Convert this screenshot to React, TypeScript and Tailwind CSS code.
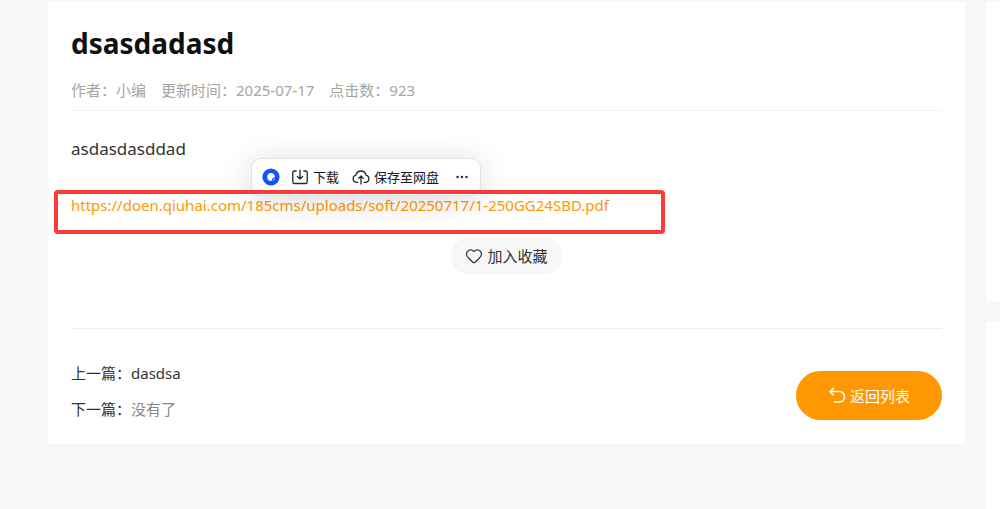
import { Heart } from "lucide-react";

const fileUrl = "https://doen.qiuhai.com/185cms/uploads/soft/20250717/1-250GG24SBD.pdf";

function DownloadBar() {
    return (
        <div className="absolute left-[180px] -top-[29px] flex h-[38px] w-[230px] items-center rounded-[10px] border border-[#e2e2e4] bg-white pl-[10px] font-['Noto_Sans_CJK_SC',sans-serif] text-[13px] text-[#14142b] shadow-[0_4px_32px_rgba(0,0,0,0.15)]">
            <svg className="size-[18px] shrink-0" viewBox="0 0 18 18" fill="none">
                <circle cx="9" cy="9" r="8.6" fill="#1254fb" />
                <path d="M9 5a4 4 0 0 1 4 4.2c-1.9.1-3.3 1.3-3.5 3.8A4 4 0 1 1 9 5Z" fill="#fff" />
                <path d="M10.8 12.6c.1-1.1.8-1.8 1.9-2-.2.9-.9 1.7-1.9 2Z" fill="#fff" />
            </svg>
            <button type="button" className="ml-[11px] flex items-center gap-1 whitespace-nowrap">
                <svg className="size-[18px]" viewBox="0 0 18 18" fill="none" stroke="#24243a" strokeWidth="1.3" strokeLinecap="round" strokeLinejoin="round">
                    <path d="M5.2 3H3.4A1.6 1.6 0 0 0 1.8 4.6v9.3a1.6 1.6 0 0 0 1.6 1.6h11.2a1.6 1.6 0 0 0 1.6-1.6V4.6A1.6 1.6 0 0 0 14.6 3h-1.8" />
                    <path d="M9 2.2v8.6M6.4 8.5 9 11.1l2.6-2.6" />
                </svg>
                下载
            </button>
            <button type="button" className="ml-[13px] flex items-center gap-1 whitespace-nowrap">
                <svg className="size-[18px]" viewBox="0 0 18 18" fill="none" stroke="#24243a" strokeWidth="1.3" strokeLinecap="round" strokeLinejoin="round">
                    <path d="M5.8 14.4H4.9A3.7 3.7 0 0 1 4 7.1a5.1 5.1 0 0 1 10 0 3.7 3.7 0 0 1-.9 7.3h-.9" />
                    <path d="M9 16V8.2M6.6 10.4 9 8l2.4 2.4" />
                </svg>
                保存至网盘
            </button>
            <button type="button" aria-label="更多" className="ml-4">
                <svg className="h-[18px] w-[14px]" viewBox="0 0 14 18" fill="#24243a">
                    <circle cx="2.5" cy="9" r="1.2" />
                    <circle cx="7" cy="9" r="1.2" />
                    <circle cx="11.5" cy="9" r="1.2" />
                </svg>
            </button>
        </div>
    );
}

export default function App() {
    return (
        <div className="flex min-h-screen gap-[21px] overflow-hidden bg-[#f7f7f7] pt-[2px] pl-12 font-['Noto_Sans','Noto_Sans_CJK_SC',sans-serif] text-[15px] text-[#333]">
            <main className="min-w-0 flex-1 self-start bg-white px-[23px] pt-5 pb-[17px]">
                <h1 className="text-[28px] leading-[42px] font-bold text-[#111]">dsasdadasd</h1>
                <div className="mt-[14px] flex gap-[15px] border-b border-[#f3f3f3] pb-2 leading-6 text-[#a5a5a5]">
                    <span>作者：小编</span>
                    <span>更新时间：2025-07-17</span>
                    <span>点击数：923</span>
                </div>
                <article className="mt-5 leading-9">
                    <p className="text-[17px]">asdasdasddad</p>
                    <div className="relative mt-5">
                        <a href={fileUrl} className="text-[#ff9800]">{fileUrl}</a>
                        <DownloadBar />
                        <div className="pointer-events-none absolute -left-[17px] top-[3px] h-[44px] w-[611px] rounded-[4px] border-4 border-[#fb3a3a]" />
                    </div>
                </article>
                <div className="mt-[14px] flex justify-center">
                    <button type="button" className="flex h-[38px] items-center gap-1 rounded-full bg-[#f7f7f7] px-[14px]">
                        <Heart className="size-[18px]" strokeWidth={1.6} />
                        加入收藏
                    </button>
                </div>
                <div className="mt-[53px] flex items-end justify-between border-t border-[#eee] pt-[26px] leading-9">
                    <div>
                        <p>上一篇：<a href="#">dasdsa</a></p>
                        <p>下一篇：<span className="text-[#888]">没有了</span></p>
                    </div>
                    <a href="#" className="mb-[7px] flex h-[49px] w-[146px] items-center justify-center gap-1 rounded-full bg-[#ff9800] text-white">
                        <svg className="size-[18px]" viewBox="0 0 18 18" fill="none" stroke="currentColor" strokeWidth="1.5" strokeLinecap="round" strokeLinejoin="round">
                            <path d="M5.4 1.2 2 4.6l3.4 3.4" />
                            <path d="M2.2 4.6h9.2a5.2 5.2 0 0 1 0 10.4H6.2" />
                        </svg>
                        返回列表
                    </a>
                </div>
            </main>
            <aside className="flex w-[14px] shrink-0 flex-col gap-[21px]">
                <div className="h-[299px] bg-white" />
                <div className="flex-1 bg-white" />
            </aside>
        </div>
    );
}
